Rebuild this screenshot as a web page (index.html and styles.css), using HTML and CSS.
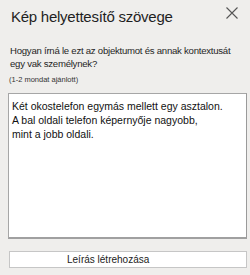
FILE: index.html
```html
<!DOCTYPE html>
<html lang="hu">
<head>
	<meta charset="UTF-8">
	<title>Kép helyettesítő szövege</title>
	<link rel="stylesheet" href="styles.css">
</head>
<body>
	<div class="pane">
		<div class="head">
			<h1 class="title">Kép helyettesítő szövege</h1>
			<span class="close">
				<svg width="12" height="12" viewBox="0 0 12 12"><path d="M0.5 0.5L11.5 11.5M11.5 0.5L0.5 11.5" stroke="#555" stroke-width="1.1" fill="none"/></svg>
			</span>
		</div>
		<p class="ask">Hogyan írná le ezt az objektumot és annak kontextusát egy vak személynek?</p>
		<p class="hint">(1-2 mondat ajánlott)</p>
		<div class="box">Két okostelefon egymás mellett egy asztalon.<br>A bal oldali telefon képernyője nagyobb,<br>mint a jobb oldali.</div>
		<div class="btn">Leírás létrehozása</div>
	</div>
</body>
</html>
```
FILE: styles.css
```css
body{margin:0;background:#efeeec;font-family:"Liberation Sans",Arial,sans-serif;color:#222;}
.pane{width:250px;height:275px;padding:0 3px 0 8px;box-sizing:border-box;display:flex;flex-direction:column;}
.head{display:flex;justify-content:space-between;align-items:flex-start;padding:7px 9px 0 3px;}
.title{margin:0;font-size:15px;letter-spacing:-0.25px;font-weight:normal;line-height:20px;color:#1f1f1f;}
.close{margin-top:0;display:flex;}
.ask{margin:17px 0 0 2px;max-width:228px;font-size:9.6px;letter-spacing:-0.25px;line-height:13px;color:#262626;}
.hint{margin:5px 0 0 1px;font-size:7.5px;line-height:10px;color:#333;}
.box{margin-top:8px;height:146px;background:#fff;border:1px solid #a6a6a6;border-right-color:#9a9a9a;border-bottom:2px solid #a0a0a0;padding:5px 3px;box-sizing:border-box;font-size:10.5px;line-height:14px;color:#111;}
.btn{margin:12px 0 0 1px;height:17px;background:#fff;border:1px solid #c6c6c6;box-sizing:border-box;font-size:10px;line-height:15px;padding-left:57px;color:#222;}
```
